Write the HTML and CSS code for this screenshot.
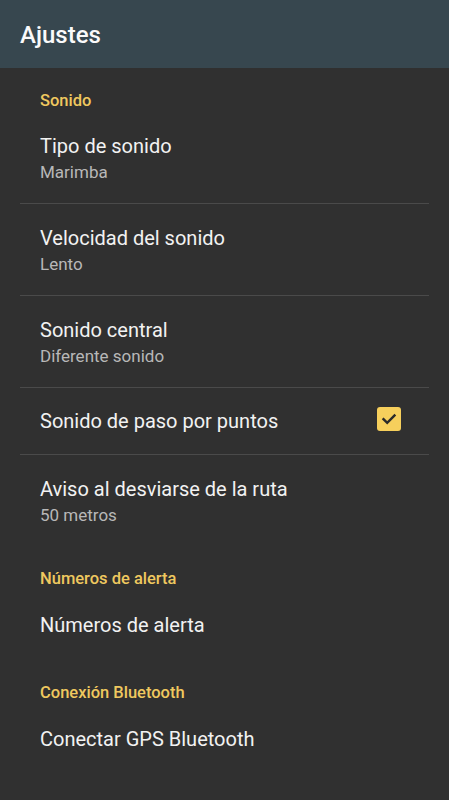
FILE: index.html
```html
<!DOCTYPE html>
<html lang="es">
  <head>
    <meta charset="UTF-8" />
    <meta name="viewport" content="width=device-width, initial-scale=1.0" />
    <title>Ajustes</title>
    <link rel="stylesheet" href="styles.css">
  </head>
  <body>
    <div id="wrapper">
      <div class="toolbar">
        <h1 class="toolbar-title">Ajustes</h1>
      </div>

      <div class="list">
        <!-- Sonido -->
        <div class="category">Sonido</div>
        <div class="pref divided">
          <div class="pref-text">
            <div class="pref-title">Tipo de sonido</div>
            <div class="pref-summary">Marimba</div>
          </div>
        </div>
        <div class="pref divided">
          <div class="pref-text">
            <div class="pref-title">Velocidad del sonido</div>
            <div class="pref-summary">Lento</div>
          </div>
        </div>
        <div class="pref divided">
          <div class="pref-text">
            <div class="pref-title">Sonido central</div>
            <div class="pref-summary">Diferente sonido</div>
          </div>
        </div>
        <div class="pref divided check-row">
          <div class="pref-text">
            <div class="pref-title">Sonido de paso por puntos</div>
          </div>
          <div class="checkbox">
            <svg width="16" height="16" viewBox="0 0 16 16">
              <path d="M2.5 8.2 L6.2 11.8 L13.5 4.5" fill="none" stroke="#2a2a2a" stroke-width="2.4" stroke-linecap="square" />
            </svg>
          </div>
        </div>
        <div class="pref">
          <div class="pref-text">
            <div class="pref-title">Aviso al desviarse de la ruta</div>
            <div class="pref-summary">50 metros</div>
          </div>
        </div>

        <!-- Números de alerta -->
        <div class="category">Números de alerta</div>
        <div class="pref single">
          <div class="pref-text">
            <div class="pref-title">Números de alerta</div>
          </div>
        </div>

        <!-- Conexión Bluetooth -->
        <div class="category">Conexión Bluetooth</div>
        <div class="pref single">
          <div class="pref-text">
            <div class="pref-title">Conectar GPS Bluetooth</div>
          </div>
        </div>

        <div class="category">Opciones</div>
      </div>
    </div>
  </body>
</html>
```

FILE: styles.css
```css
* {
  padding: 0;
  margin: 0;
  box-sizing: border-box;
}
html,
body {
  height: 100%;
  background: #303030;
}
body {
  font-family: Roboto, "Noto Sans", "Liberation Sans", sans-serif;
  overflow: hidden;
}
#wrapper {
  width: 449px;
  height: 800px;
  display: flex;
  flex-direction: column;
  overflow: hidden;
}

.toolbar {
  height: 68px;
  flex: none;
  background: #37474f;
  padding: 0 20px;
  display: flex;
  align-items: center;
}
.toolbar-title {
  color: #fafafa;
  font-size: 24px;
  font-weight: 500;
  line-height: 30px;
  margin-top: 1px;
}

.list {
  flex: 1;
  overflow: hidden;
}

.category {
  padding: 23px 40px 1px;
  font-size: 16.5px;
  line-height: 20px;
  font-weight: 500;
  color: #efc85f;
}

.pref {
  margin: 0 20px;
  padding: 21px 28px 21px 20px;
  display: flex;
  align-items: center;
  justify-content: space-between;
}
.pref.divided {
  border-bottom: 1px solid #4a4a4a;
}
.pref.check-row {
  padding-top: 20px;
  padding-bottom: 20px;
}
.pref.single {
  padding-top: 22px;
  padding-bottom: 22px;
}
.pref-title {
  color: #f2f2f2;
  font-size: 20px;
  line-height: 26px;
}
.pref-summary {
  margin-top: 3px;
  color: #b8b8b8;
  font-size: 17px;
  line-height: 20px;
}

.checkbox {
  width: 24px;
  height: 24px;
  border-radius: 3px;
  background: #f6cf5c;
  display: flex;
  align-items: center;
  justify-content: center;
  margin-top: -4px;
}
```
